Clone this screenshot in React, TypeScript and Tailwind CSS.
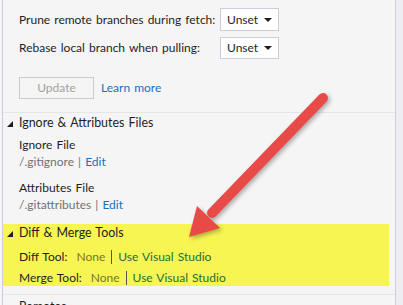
import { ReactNode } from "react";

const font = { fontFamily: "Lato, 'Liberation Sans', sans-serif" };

function Caret() {
  return (
    <svg width="8" height="4" viewBox="0 0 8 4" className="fill-[#1e1e1e]">
      <polygon points="0,0 8,0 4,4" />
    </svg>
  );
}

function Expander() {
  return (
    <svg width="6" height="6" viewBox="0 0 6 6" className="fill-[#1e1e1e]">
      <polygon points="6,0 6,6 0,6" />
    </svg>
  );
}

function Select({ tall }: { tall?: boolean }) {
  return (
    <div
      className={`flex w-[59px] items-center justify-between border border-[#cccedb] bg-white pl-[6px] pr-[6px] ${tall ? "h-[23px]" : "h-[22px]"}`}
    >
      <span>Unset</span>
      <Caret />
    </div>
  );
}

function Header({ children }: { children: ReactNode }) {
  return (
    <div className="flex h-[17px] items-center text-[12.4px]">
      <div className="flex w-[16px] justify-end pr-[6px]">
        <Expander />
      </div>
      <span>{children}</span>
    </div>
  );
}

function Separator() {
  return <div className="h-px bg-[#e6e6ea]" />;
}

function Arrow() {
  return (
    <svg
      className="pointer-events-none absolute left-0 top-0"
      width="403"
      height="305"
      viewBox="0 0 403 305"
      style={{ filter: "drop-shadow(2px 2px 2px rgba(0,0,0,0.3))" }}
    >
      <line x1="323" y1="98" x2="212" y2="213" stroke="#e84b47" strokeWidth="10" strokeLinecap="round" />
      <polygon points="189,237 197,206 220,228" fill="#e84b47" />
    </svg>
  );
}

export default function App() {
  return (
    <div
      className="relative flex h-[305px] w-[403px] overflow-hidden bg-[#f5f5f5] text-[12px] text-[#1e1e1e] [word-spacing:1px]"
      style={font}
    >
      <div className="w-[2px] shrink-0" />
      <div className="flex w-[394px] flex-col border-l border-r border-[#cccedb]">
        <div className="pl-[16px] pt-[8px]">
          <div className="flex items-center">
            <span className="w-[201px]">Prune remote branches during fetch:</span>
            <Select tall />
          </div>
          <div className="mt-[6px] flex items-center">
            <span className="w-[201px]">Rebase local branch when pulling:</span>
            <Select />
          </div>
          <div className="mt-[18px] flex items-center">
            <div className="flex h-[22px] w-[75px] items-center justify-center border border-[#cccccc] text-[#a2a2a2]">
              Update
            </div>
            <span className="ml-[7px] text-[#1b6ec2]">Learn more</span>
          </div>
        </div>
        <div className="mt-[13px]">
          <Separator />
        </div>
        <div className="mt-[2px]">
          <Header>Ignore &amp; Attributes Files</Header>
          <div className="mt-[4px] pl-[16px]">
            <div className="h-[17px] leading-[17px]">Ignore File</div>
            <div className="h-[17px] leading-[17px] text-[#717171]">
              /.gitignore | <span className="text-[#1b6ec2]">Edit</span>
            </div>
            <div className="mt-[9px] h-[17px] leading-[17px]">Attributes File</div>
            <div className="h-[17px] leading-[17px] text-[#717171]">
              /.gitattributes | <span className="text-[#1b6ec2]">Edit</span>
            </div>
          </div>
        </div>
        <div className="mr-[6px] mt-[11px] h-[63px] bg-[#f6f552] pt-[1px]">
          <Header>Diff &amp; Merge Tools</Header>
          <div className="mt-[6px] flex h-[17px] items-center pl-[16px]">
            <span>Diff Tool:</span>
            <span className="ml-[9px] text-[#77772e]">None</span>
            <span className="mx-[6px] h-[14px] w-px bg-[#555555]" />
            <span className="text-[#1f6e3c]">Use Visual Studio</span>
          </div>
          <div className="mt-[4px] flex h-[17px] items-center pl-[16px]">
            <span>Merge Tool:</span>
            <span className="ml-[9px] text-[#77772e]">None</span>
            <span className="mx-[6px] h-[14px] w-px bg-[#555555]" />
            <span className="text-[#1f6e3c]">Use Visual Studio</span>
          </div>
        </div>
        <div className="mt-[8px]">
          <Separator />
        </div>
        <div className="mt-[4px]">
          <Header>Remotes</Header>
        </div>
      </div>
      <div className="flex-1 bg-[#eeeef2]" />
      <Arrow />
    </div>
  );
}
